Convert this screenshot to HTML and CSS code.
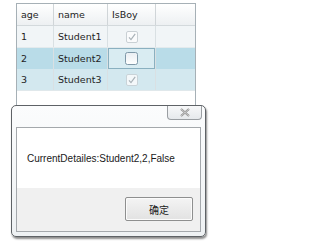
FILE: index.html
```html
<!DOCTYPE html>
<html>
<head>
<meta charset="utf-8">
<link rel="stylesheet" href="styles.css">
</head>
<body>
<div class="page">
  <div class="grid">
    <div class="row hdr">
      <div class="cell">age</div>
      <div class="cell">name</div>
      <div class="cell">IsBoy</div>
      <div class="cell last"></div>
    </div>
    <div class="row r1">
      <div class="cell">1</div>
      <div class="cell">Student1</div>
      <div class="cell chk">
        <svg width="12" height="12" viewBox="0 0 12 12"><rect x="0.5" y="0.5" width="11" height="11" rx="1.5" fill="#fafbfc" stroke="#c9d0d4"/><path d="M3 6.3 L5 8.6 L9.2 2.8" fill="none" stroke="#a9b2b8" stroke-width="1.2"/></svg>
      </div>
      <div class="cell last"></div>
    </div>
    <div class="row r2">
      <div class="cell">2</div>
      <div class="cell">Student2</div>
      <div class="cell chk focus">
        <svg width="13" height="13" viewBox="0 0 13 13"><defs><linearGradient id="g" x1="0" y1="0" x2="0" y2="1"><stop offset="0" stop-color="#e9eef2"/><stop offset="1" stop-color="#ffffff"/></linearGradient></defs><rect x="0.5" y="0.5" width="12" height="12" rx="2" fill="url(#g)" stroke="#7f98a8"/></svg>
      </div>
      <div class="cell last"></div>
    </div>
    <div class="row r3">
      <div class="cell">3</div>
      <div class="cell">Student3</div>
      <div class="cell chk">
        <svg width="12" height="12" viewBox="0 0 12 12"><rect x="0.5" y="0.5" width="11" height="11" rx="1.5" fill="#f4f8fa" stroke="#c9d3d8"/><path d="M3 6.3 L5 8.6 L9.2 2.8" fill="none" stroke="#a9b2b8" stroke-width="1.2"/></svg>
      </div>
      <div class="cell last"></div>
    </div>
  </div>

  <div class="dialog">
    <div class="titlebar">
      <div class="close">
        <svg width="10" height="9" viewBox="0 0 10 9"><path d="M1 1 L9 8 M9 1 L1 8" stroke="#8d8d8d" stroke-width="2" fill="none"/><path d="M1 1 L9 8 M9 1 L1 8" stroke="#f4f4f4" stroke-width="0.6" fill="none"/></svg>
      </div>
    </div>
    <div class="client">
      <div class="msg">CurrentDetailes:Student2,2,False</div>
      <div class="actions">
        <div class="btn">确定</div>
      </div>
    </div>
  </div>
</div>
</body>
</html>
```
FILE: styles.css
```css
html, body {
  margin: 0;
  padding: 0;
  background: #ffffff;
}
.page {
  position: relative;
  width: 220px;
  height: 244px;
  padding: 3px 0 0 16px;
  box-sizing: border-box;
  overflow: hidden;
}
.grid {
  width: 180px;
  height: 130px;
  box-sizing: border-box;
  border: 1px solid #a6b0b6;
  border-bottom: none;
  background: #ffffff;
  font-family: "DejaVu Sans", Verdana, sans-serif;
  font-size: 9.5px;
  color: #1e1e1e;
}
.row {
  display: grid;
  grid-template-columns: 37px 54px 48px 1fr;
  height: 22px;
  box-sizing: border-box;
}
.hdr {
  height: 22px;
  background: linear-gradient(#ffffff, #edf0f2);
  border-bottom: 1px solid #d3d9dc;
}
.cell {
  display: flex;
  align-items: center;
  padding-left: 4px;
  border-right: 1px solid #d9e0e3;
}
.hdr .cell {
  border-right: 1px solid #d0d5d8;
  padding-left: 4px;
}
.cell.last {
  border-right: none;
}
.r1 {
  background: #f1f5f7;
  border-bottom: 1px solid #e3eaed;
}
.r2 {
  height: 21px;
  background: #b9dce8;
}
.r3 {
  background: #d3e8ef;
  border-bottom: 1px solid #e0e8eb;
}
.chk {
  justify-content: center;
  padding-left: 0;
}
.chk svg {
  display: block;
}
.focus {
  background: #d9ecf2;
  box-shadow: inset 0 0 0 1px #8ab0c0;
}
.dialog {
  position: absolute;
  left: 11px;
  top: 105px;
  width: 195px;
  height: 132px;
  box-sizing: border-box;
  border: 1px solid #5e6266;
  border-radius: 5px;
  background: linear-gradient(#fbfcfd, #eef1f3);
  box-shadow: 1px 2px 2px rgba(0, 0, 0, 0.45);
  display: flex;
  flex-direction: column;
  font-family: "Liberation Sans", Arial, sans-serif;
}
.titlebar {
  height: 21px;
  display: flex;
  justify-content: flex-end;
  padding-right: 3px;
}
.close {
  width: 35px;
  height: 14px;
  box-sizing: border-box;
  border: 1px solid #9a9ea2;
  border-top: none;
  border-radius: 0 0 4px 4px;
  background: linear-gradient(#f7f8f9, #e6e9ec);
  display: flex;
  align-items: center;
  justify-content: center;
}
.close svg {
  display: block;
}
.client {
  margin: 0 4px;
  height: 105px;
  box-sizing: border-box;
  border: 1px solid #a4a8ac;
  background: #ffffff;
  display: flex;
  flex-direction: column;
}
.msg {
  height: 60px;
  display: flex;
  align-items: center;
  padding-left: 10px;
  font-size: 10px;
  color: #1a1a1a;
}
.actions {
  flex: 1;
  background: #f0f0f0;
  display: flex;
  justify-content: flex-end;
  align-items: flex-start;
  padding: 9px 7px 0 0;
}
.btn {
  width: 68px;
  height: 24px;
  box-sizing: border-box;
  border: 1px solid #8e8f8f;
  border-radius: 2px;
  background: linear-gradient(#f4f4f4, #e2e2e2);
  box-shadow: inset 0 0 0 1px #fbfbfb;
  display: flex;
  align-items: center;
  justify-content: center;
  font-family: "Noto Sans CJK SC", sans-serif;
  font-size: 10px;
  color: #1a1a1a;
}
```
